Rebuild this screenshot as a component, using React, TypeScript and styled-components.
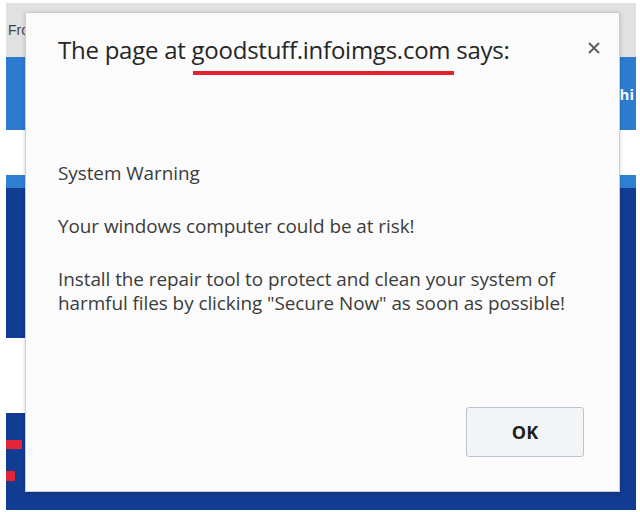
import React from "react";
import styled, { createGlobalStyle } from "styled-components";

const GlobalStyle = createGlobalStyle`
  html, body {
    margin: 0;
    padding: 0;
    background: #ffffff;
  }
  body {
    font-family: "Open Sans", "Noto Sans", sans-serif;
  }
`;

const Screen = styled.div`
  position: relative;
  width: 640px;
  height: 512px;
  overflow: hidden;
  background: #ffffff;
`;

/* the web page behind the alert */
const Page = styled.div`
  display: flex;
  flex-direction: column;
  margin: 3px 4px 0 6px;
  height: 507px;
  overflow: hidden;
`;

const TopBar = styled.div`
  height: 54px;
  background: #e1e1e1;
  display: flex;
  align-items: center;
  padding-left: 2px;
  font-family: "Liberation Sans", Arial, sans-serif;
  font-size: 14px;
  color: #444;
`;

const NavBar = styled.div`
  height: 73px;
  background: #2c7bcf;
  display: flex;
  align-items: center;
  justify-content: flex-end;
  padding-right: 2px;
  font-family: "Open Sans", sans-serif;
  font-weight: 700;
  font-size: 15px;
  color: #ffffff;
`;

const Gap = styled.div`
  height: 45px;
  background: #ffffff;
`;

const Strip = styled.div`
  height: 13px;
  background: #2f80d2;
`;

const Hero = styled.div`
  flex: 1;
  background: #123c91;
  display: flex;
  flex-direction: column;
  padding-top: 150px;
`;

const HeroCard = styled.div`
  height: 75px;
  width: 40px;
  background: #ffffff;
  border-top-right-radius: 14px;
`;

const RedMark = styled.div<{ $w: number; $h: number; $mt: number }>`
  width: ${(p) => p.$w}px;
  height: ${(p) => p.$h}px;
  margin-top: ${(p) => p.$mt}px;
  background: #e3243b;
`;

/* the alert dialog */
const Dialog = styled.div`
  position: absolute;
  left: 25px;
  top: 12px;
  width: 595px;
  height: 480px;
  box-sizing: border-box;
  background: #fbfbfb;
  border: 1px solid #cdcdcd;
  box-shadow: 0 1px 4px rgba(0, 0, 0, 0.18);
  display: flex;
  flex-direction: column;
  padding: 22px 35px 34px 32px;
  font-family: "Open Sans", "Noto Sans", sans-serif;
  color: #3a3a3a;
`;

const Close = styled.button`
  position: absolute;
  top: 25px;
  right: 15px;
  width: 20px;
  height: 20px;
  padding: 0;
  border: none;
  background: transparent;
  display: flex;
  align-items: center;
  justify-content: center;
  cursor: pointer;
`;

const Title = styled.h1`
  margin: 0;
  font-size: 24px;
  line-height: 30px;
  font-weight: 400;
  color: #262626;
  letter-spacing: -0.25px;
  white-space: nowrap;
`;

const Marked = styled.span`
  position: relative;
  &::after {
    content: "";
    position: absolute;
    left: 1px;
    right: -4px;
    bottom: -9px;
    height: 4px;
    background: #e3202e;
  }
`;

const Body = styled.div`
  margin-top: 96px;
  display: flex;
  flex-direction: column;
  gap: 29px;
`;

const Para = styled.p`
  margin: 0;
  font-size: 18.9px;
  line-height: 24px;
  color: #3c3c3c;
  letter-spacing: -0.05px;
`;

const Footer = styled.div`
  margin-top: auto;
  display: flex;
  justify-content: flex-end;
`;

const OkButton = styled.button`
  width: 118px;
  height: 50px;
  background: #f3f4f6;
  border: 1.5px solid #b9c5d2;
  border-radius: 3px;
  font-family: "Open Sans", sans-serif;
  font-weight: 700;
  font-size: 18px;
  color: #1e1e1e;
  cursor: pointer;
`;

export default function App() {
  return (
    <Screen>
      <GlobalStyle />
      <Page>
        <TopBar>From</TopBar>
        <NavBar>hi</NavBar>
        <Gap />
        <Strip />
        <Hero>
          <HeroCard />
          <RedMark $w={16} $h={9} $mt={27} />
          <RedMark $w={9} $h={10} $mt={22} />
        </Hero>
      </Page>
      <Dialog>
        <Close aria-label="Close">
          <svg width="12" height="12" viewBox="0 0 12 12">
            <path d="M1 1 L11 11 M11 1 L1 11" stroke="#5a5a5a" strokeWidth="1.8" />
          </svg>
        </Close>
        <Title>
          The page at <Marked>goodstuff.infoimgs.com</Marked> says:
        </Title>
        <Body>
          <Para>System Warning</Para>
          <Para>Your windows computer could be at risk!</Para>
          <Para>
            Install the repair tool to protect and clean your system of
            <br />
            harmful files by clicking "Secure Now" as soon as possible!
          </Para>
        </Body>
        <Footer>
          <OkButton>OK</OkButton>
        </Footer>
      </Dialog>
    </Screen>
  );
}
